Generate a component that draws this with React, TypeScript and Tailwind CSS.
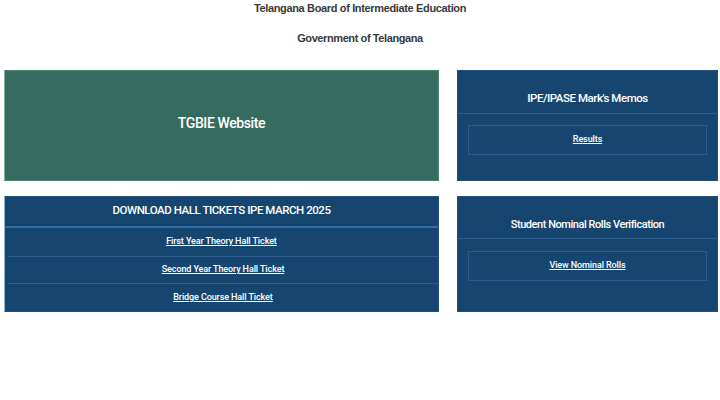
const font = { fontFamily: '"Liberation Sans", Arial, sans-serif' };
const cardFont = { fontFamily: 'Roboto, "Liberation Sans", Arial, sans-serif' };

function LinkRow({ label, first }: { label: string; first?: boolean }) {
  return (
    <div
      className={`flex items-center justify-center border-t ${
        first ? "h-[29px] border-[#2f6ca3]" : "ml-[3px] h-[28px] border-[#2c5d8c]"
      }`}
    >
      <a href="#" className="text-[9px] font-medium tracking-[-0.1px] text-white underline">
        {label}
      </a>
    </div>
  );
}

function BoxLink({ label }: { label: string }) {
  return (
    <div className="mx-[10px] flex h-[30px] items-center justify-center border border-[#2d5c88]">
      <a href="#" className="text-[9px] font-medium tracking-[-0.1px] text-white underline">
        {label}
      </a>
    </div>
  );
}

export default function App() {
  return (
    <div className="h-[400px] w-[720px] bg-white" style={font}>
      <header className="text-center font-bold text-[#3a3a3a]">
        <p className="pt-[1px] text-[11px] leading-[14px] tracking-[-0.35px]">
          Telangana Board of Intermediate Education
        </p>
        <p className="mt-[16px] text-[11px] leading-[14px] tracking-[-0.4px]">
          Government of Telangana
        </p>
      </header>

      <main
        className="mt-[25px] grid grid-cols-[435px_261px] grid-rows-[111px_116px] gap-x-[18px] gap-y-[15px] pl-[4px]"
        style={cardFont}
      >
        <a
          href="#"
          className="flex items-center justify-center border border-[#4e8275] border-l-[#7fb0a4] bg-[#366c5f] pb-[4px] text-[14px] font-medium tracking-[-0.4px] text-white"
        >
          TGBIE Website
        </a>

        <section className="flex flex-col border border-[#23507a] bg-[#16466f] text-white">
          <h2 className="flex h-[42px] items-end justify-center pb-[6px] text-[11.5px] font-medium tracking-[-0.45px]">
            IPE/IPASE Mark's Memos
          </h2>
          <div className="border-t border-[#2c5d8c] pt-[11px]">
            <BoxLink label="Results" />
          </div>
        </section>

        <section className="flex flex-col border border-[#23507a] border-l-[#8fbcd2] bg-[#16466f] text-white">
          <h2 className="flex h-[29px] items-center justify-center pb-[1px] text-[11.5px] font-medium tracking-[-0.45px]">
            DOWNLOAD HALL TICKETS IPE MARCH 2025
          </h2>
          <div className="border-t border-[#2f6ca3]" />
          <LinkRow label="First Year Theory Hall Ticket" first />
          <LinkRow label="Second Year Theory Hall Ticket" />
          <LinkRow label="Bridge Course Hall Ticket" />
        </section>

        <section className="flex flex-col border border-[#23507a] bg-[#16466f] text-white">
          <h2 className="flex h-[41px] items-end justify-center pb-[5px] text-[11px] font-medium tracking-[-0.45px]">
            Student Nominal Rolls Verification
          </h2>
          <div className="border-t border-[#2c5d8c] pt-[12px]">
            <BoxLink label="View Nominal Rolls" />
          </div>
        </section>
      </main>
    </div>
  );
}
